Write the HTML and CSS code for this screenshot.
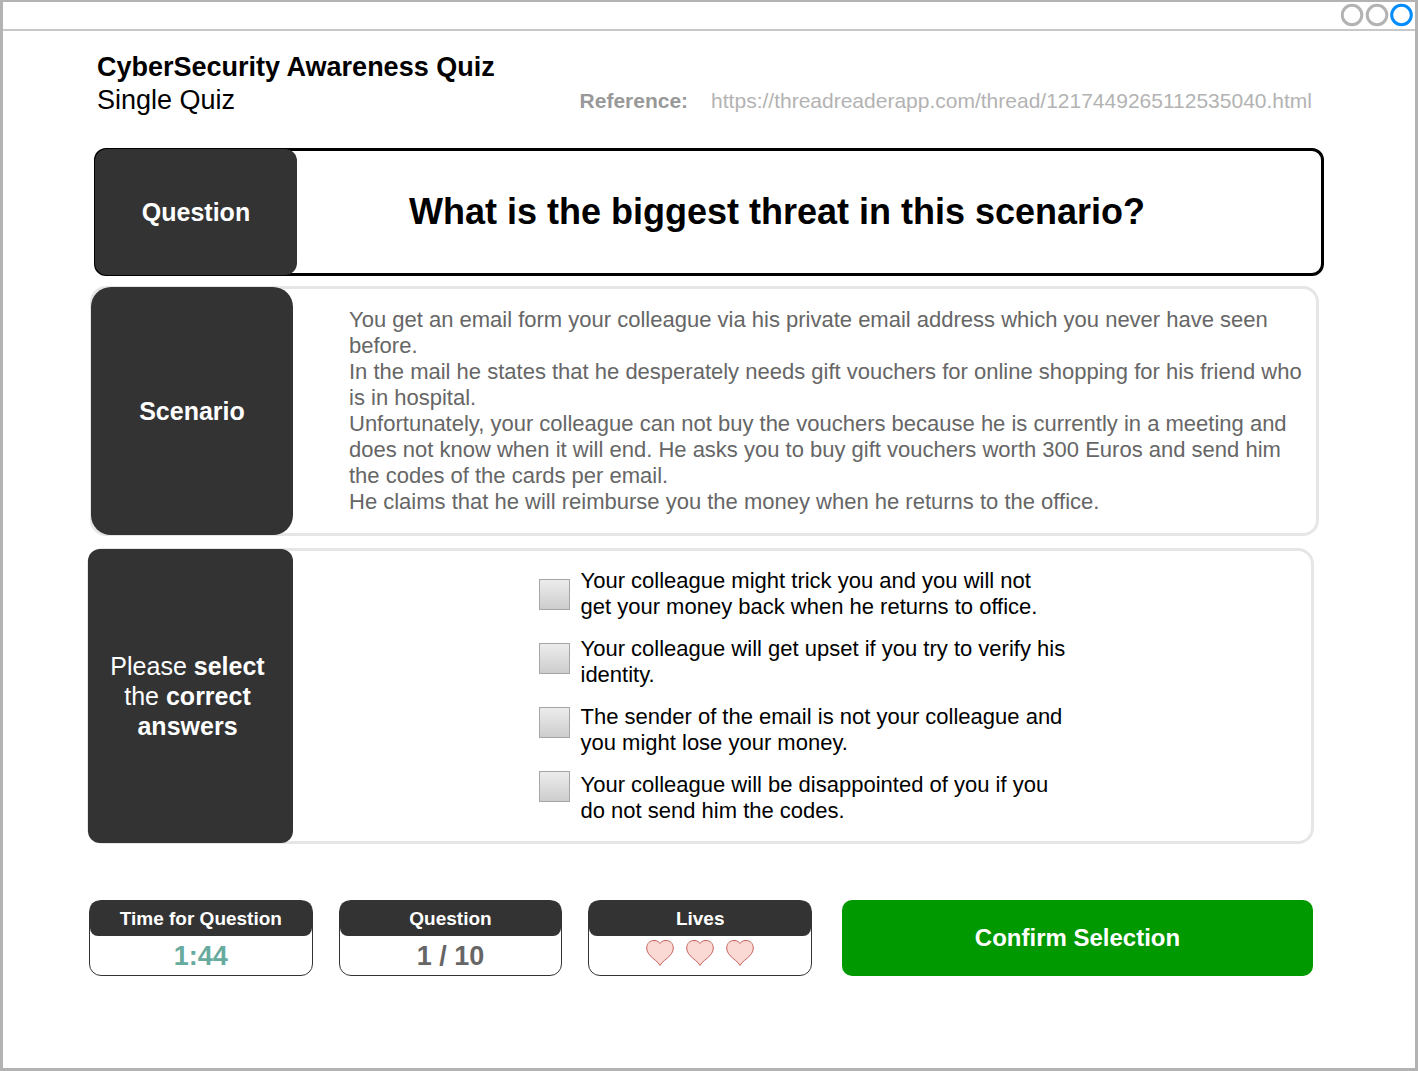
FILE: index.html
```html
<!DOCTYPE html>
<html lang="en">
<head>
<meta charset="utf-8">
<meta name="viewport" content="width=device-width, initial-scale=1">
<title>CyberSecurity Awareness Quiz</title>
<link rel="stylesheet" href="styles.css">
</head>
<body>
<div class="window">
  <div class="titlebar">
    <svg class="controls" width="74" height="25" viewBox="0 0 74 25" fill="none" stroke="#b3b3b3" stroke-width="3" aria-hidden="true">
      <circle cx="11" cy="12" r="9.8"/>
      <circle cx="36" cy="12" r="9.8"/>
      <circle cx="60.5" cy="12" r="9.8" stroke="#008cff"/>
    </svg>
  </div>
  <main class="page">
    <header class="header">
      <div>
        <h1 class="title">CyberSecurity Awareness Quiz</h1>
        <p class="subtitle">Single Quiz</p>
      </div>
      <p class="reference"><strong class="reference-label">Reference:</strong> <a class="reference-link" href="https://threadreaderapp.com/thread/1217449265112535040.html">https://threadreaderapp.com/thread/1217449265112535040.html</a></p>
    </header>

    <section class="panel panel-question">
      <h2 class="tab">Question</h2>
      <p class="question">What is the biggest threat in this scenario?</p>
    </section>

    <section class="panel panel-scenario">
      <h2 class="tab">Scenario</h2>
      <div class="scenario">
        <p>You get an email form your colleague via his private email address which you never have seen before.</p>
        <p>In the mail he states that he desperately needs gift vouchers for online shopping for his friend who is in hospital.</p>
        <p>Unfortunately, your colleague can not buy the vouchers because he is currently in a meeting and does not know when it will end. He asks you to buy gift vouchers worth 300 Euros and send him the codes of the cards per email.</p>
        <p>He claims that he will reimburse you the money when he returns to the office.</p>
      </div>
    </section>

    <form class="quiz">
      <section class="panel panel-answers">
        <h2 class="tab tab-light"><span>Please <strong>select</strong> the <strong>correct</strong> <strong>answers</strong></span></h2>
        <div class="answers">
          <div class="boxes">
            <input class="box" type="checkbox" id="answer-1">
            <input class="box" type="checkbox" id="answer-2">
            <input class="box" type="checkbox" id="answer-3">
            <input class="box" type="checkbox" id="answer-4">
          </div>
          <div class="labels">
            <label for="answer-1">Your colleague might trick you and you will not get your money back when he returns to office.</label>
            <label for="answer-2">Your colleague will get upset if you try to verify his identity.</label>
            <label for="answer-3">The sender of the email is not your colleague and you might lose your money.</label>
            <label for="answer-4">Your colleague will be disappointed of you if you do not send him the codes.</label>
          </div>
        </div>
      </section>

      <div class="footer">
        <div class="stats">
          <section class="stat">
            <h3 class="stat-name">Time for Question</h3>
            <p class="stat-value time">1:44</p>
          </section>
          <section class="stat">
            <h3 class="stat-name">Question</h3>
            <p class="stat-value">1 / 10</p>
          </section>
          <section class="stat">
            <h3 class="stat-name">Lives</h3>
            <div class="lives" role="img" aria-label="3 lives">
              <svg class="heart" viewBox="0 0 28 28"><path d="M14 26.500C11.500 22 7.500 20.500 4 16.500C2 14 .7 12 .7 9C.7 4 4.500 1.500 8 1.500C11 1.500 13 2.800 14 4.500C15 2.800 17 1.500 20 1.500C23.500 1.500 27.300 4 27.300 9C27.300 12 26 14 24 16.500C20.500 20.500 16.500 22 14 26.500Z"/></svg>
              <svg class="heart" viewBox="0 0 28 28"><path d="M14 26.500C11.500 22 7.500 20.500 4 16.500C2 14 .7 12 .7 9C.7 4 4.500 1.500 8 1.500C11 1.500 13 2.800 14 4.500C15 2.800 17 1.500 20 1.500C23.500 1.500 27.300 4 27.300 9C27.300 12 26 14 24 16.500C20.500 20.500 16.500 22 14 26.500Z"/></svg>
              <svg class="heart" viewBox="0 0 28 28"><path d="M14 26.500C11.500 22 7.500 20.500 4 16.500C2 14 .7 12 .7 9C.7 4 4.500 1.500 8 1.500C11 1.500 13 2.800 14 4.500C15 2.800 17 1.500 20 1.500C23.500 1.500 27.300 4 27.300 9C27.300 12 26 14 24 16.500C20.500 20.500 16.500 22 14 26.500Z"/></svg>
            </div>
          </section>
        </div>
        <button class="confirm" type="submit">Confirm Selection</button>
      </div>
    </form>
  </main>
</div>
</body>
</html>
```
FILE: styles.css
```css
* {
  box-sizing: border-box;
}

body,
h1,
h2,
h3,
p {
  margin: 0;
}

body {
  font-family: "Liberation Sans", Arial, sans-serif;
  font-size: 22px;
  line-height: 26px;
  color: #000;
  background: #fff;
}

.window {
  min-height: 100vh;
  border: 3px solid #b3b3b3;
  border-top-width: 2px;
}

.titlebar {
  display: flex;
  justify-content: flex-end;
  align-items: center;
  height: 29px;
  border-bottom: 2px solid #c8c8c8;
}

.page {
  padding: 20px 91px 40px 84px;
}

.header {
  display: flex;
  justify-content: space-between;
  align-items: flex-end;
  padding: 0 12px 0 10px;
  margin-bottom: 31px;
}

.title,
.subtitle {
  font-size: 27px;
  line-height: 33px;
}

.subtitle {
  font-weight: 400;
}

.reference {
  display: flex;
  gap: 23px;
  font-size: 21px;
  line-height: 33px;
}

.reference-label {
  color: #999;
}

.reference-link {
  color: #b3b3b3;
  text-decoration: none;
}

.panel {
  display: flex;
  border: 3px solid #e6e6e6;
  border-radius: 16px;
}

.tab {
  display: flex;
  flex: none;
  align-items: center;
  justify-content: center;
  width: 202px;
  margin: -2px 0 -2px -2px;
  border-radius: 12px;
  font-size: 25px;
  line-height: 30px;
  text-align: center;
  color: #fff;
  background: #333;
}

.tab-light {
  width: 205px;
  padding: 0 26px 0 20px;
  font-weight: 400;
}

.panel-question {
  min-height: 128px;
  margin: 0 0 10px 7px;
  border-color: #000;
  border-radius: 12px;
}

.question {
  flex: 1;
  align-self: center;
  padding-right: 64px;
  font-size: 36px;
  line-height: 44px;
  font-weight: 700;
  text-align: center;
}

.panel-scenario {
  min-height: 250px;
  margin: 0 5px 12px 3px;
}

.panel-scenario .tab {
  border-radius: 20px;
}

.scenario {
  flex: 1;
  align-self: center;
  padding: 0 8px 0 56px;
  color: #666;
}

.panel-answers {
  min-height: 296px;
  margin-right: 10px;
}

.answers {
  display: flex;
  flex: 1;
  gap: 11px;
  justify-content: center;
  padding: 17px 0;
}

.boxes {
  display: flex;
  flex-direction: column;
  gap: 33px;
  padding-top: 11px;
}

.box {
  appearance: none;
  width: 31px;
  height: 31px;
  margin: 0;
  border: 1px solid #a6a6a6;
  background: linear-gradient(#ececec, #cdcdcd);
}

.box:checked {
  background: #333;
}

.labels {
  display: flex;
  flex-direction: column;
  gap: 16px;
  width: 485px;
}

.footer {
  display: flex;
  gap: 30px;
  margin: 56px 11px 0 2px;
}

.stats {
  display: flex;
  flex: 723;
  gap: 26px;
}

.stat {
  flex: 1;
  border: 1px solid #333;
  border-radius: 12px;
}

.stat-name {
  border-radius: 8px;
  font-size: 19px;
  line-height: 35px;
  text-align: center;
  color: #fff;
  background: #333;
}

.stat-value {
  padding-top: 2px;
  font-size: 27px;
  line-height: 37px;
  font-weight: 700;
  text-align: center;
  color: #666;
}

.time {
  color: #67ab9f;
}

.lives {
  display: flex;
  justify-content: center;
  gap: 12px;
  padding-top: 3px;
}

.heart {
  width: 28px;
  height: 28px;
  fill: #fad9d5;
  stroke: #c4655a;
  stroke-width: 1;
}

.confirm {
  flex: 471;
  min-height: 75px;
  padding: 0;
  border: 0;
  border-radius: 10px;
  font: 700 24px/28px "Liberation Sans", Arial, sans-serif;
  color: #fff;
  background: #090;
}
```
